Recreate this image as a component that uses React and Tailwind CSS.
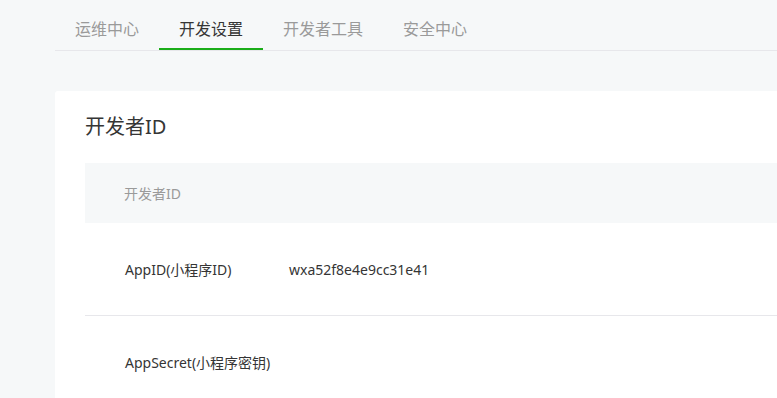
export default function App() {
  const tabs = ["运维中心", "开发设置", "开发者工具", "安全中心"];
  return (
    <div
      className="h-screen bg-[#f6f8f9] pl-[54px] overflow-hidden"
      style={{ fontFamily: '"Noto Sans", "Noto Sans CJK SC", sans-serif' }}
    >
      <nav className="flex h-[51px] border-b border-[#e7e7eb] ml-px">
        {tabs.map((t, i) => (
          <div
            key={t}
            className={
              "relative px-5 pt-[18px] text-[16px] leading-[22px] whitespace-nowrap " +
              (i === 1 ? "text-[#353535]" : "text-[#9a9a9a]")
            }
          >
            {t}
            {i === 1 && (
              <span className="absolute left-0 right-0 top-[48px] h-[2px] bg-[#1aad19]" />
            )}
          </div>
        ))}
      </nav>
      <div className="mt-[40px] ml-px bg-white rounded-tl-[3px] pl-[30px] pt-[22px] pb-10">
        <h2 className="text-[20px] leading-[28px] text-[#353535] font-normal">开发者ID</h2>
        <div className="mt-[22px]">
          <div className="h-[60px] bg-[#f6f8f9] pl-[39px] flex items-center text-[14px] text-[#9a9a9a]">
            开发者ID
          </div>
          <div className="h-[93px] border-b border-[#e7e7eb] pl-[40px] flex items-center text-[14px] text-[#353535]">
            <div className="w-[164px] whitespace-nowrap">AppID(小程序ID)</div>
            <div>wxa52f8e4e9cc31e41</div>
          </div>
          <div className="h-[92px] pl-[40px] flex items-center text-[14px] text-[#353535]">
            <div className="w-[164px] whitespace-nowrap">AppSecret(小程序密钥)</div>
          </div>
        </div>
      </div>
    </div>
  );
}
